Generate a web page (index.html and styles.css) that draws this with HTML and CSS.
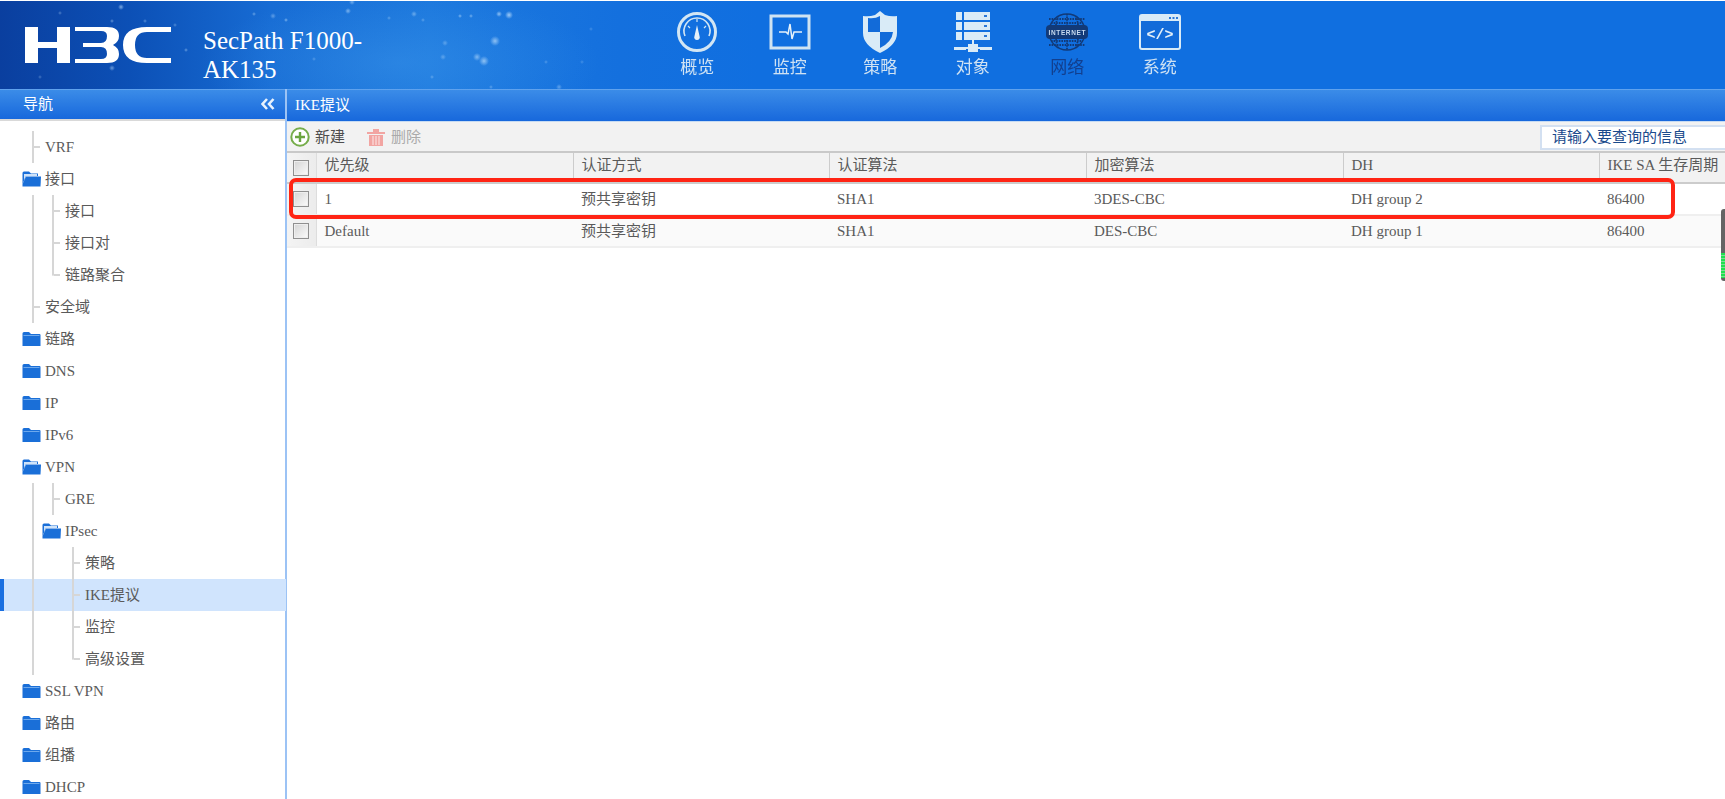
FILE: index.html
```html
<!DOCTYPE html>
<html lang="zh">
<head>
<meta charset="utf-8">
<title>IKE提议</title>
<link rel="stylesheet" href="styles.css">
</head>
<body>
<header class="top">
  <div class="brand">
    <svg class="logo" viewBox="0 0 146 36" aria-label="H3C">
      <path d="M0 0H13V15H32V0H45V36H32V21H13V36H0Z"/>
      <path d="M50 0H82Q94 0 94 9Q94 15 88 18Q94 21 94 27Q94 36 82 36H50V32H76Q82 32 82 27Q82 20 76 20H58V16H76Q82 16 82 9Q82 4 76 4H50Z"/>
      <path d="M146 0V5H122Q110 5 110 18Q110 31 122 31H146V36H122Q98 36 98 18Q98 0 122 0Z"/>
    </svg>
    <div class="model">SecPath F1000-AK135</div>
  </div>
  <nav class="mainnav">
    <a class="navitem">
      <svg viewBox="0 0 42 42" class="navicon">
        <circle cx="21" cy="21" r="18.5" fill="none" stroke="#d3e6f4" stroke-width="3"/>
        <path d="M9 25A13 13 0 1 1 33 25" fill="none" stroke="#d3e6f4" stroke-width="1.6"/>
        <path d="M21 14L23.5 25A2.8 2.8 0 1 1 18.500 25Z" fill="#e6f1f9"/>
        <path d="M12 15l2 2M30 15l-2 2M21 8v3" stroke="#d3e6f4" stroke-width="1.2"/>
      </svg>
      <span>概览</span>
    </a>
    <a class="navitem">
      <svg viewBox="0 0 42 42" class="navicon">
        <rect x="2" y="5" width="38" height="32" fill="none" stroke="#cfe3f2" stroke-width="3"/>
        <path d="M10 21H17L19 23L21 13L23 28L25 21H33" fill="none" stroke="#e6f1f9" stroke-width="1.5"/>
      </svg>
      <span>监控</span>
    </a>
    <a class="navitem">
      <svg viewBox="0 0 42 42" class="navicon">
        <path d="M21 0L26 4Q32 6 38 5V22Q38 34 21 42Q4 34 4 22V5Q10 6 16 4Z" fill="#d9ebf7"/>
        <path d="M21 7V21H9V7Q16 8 21 5ZM21 21H34Q33 31 21 37Z" fill="#126bd9"/>
      </svg>
      <span>策略</span>
    </a>
    <a class="navitem">
      <svg viewBox="0 0 42 42" class="navicon">
        <path d="M4 1H10V9H4ZM12 1H38V9H12ZM4 11H10V19H4ZM12 11H38V19H12ZM4 21H10V29H4ZM12 21H38V29H12Z" fill="#d9ebf7"/>
        <path d="M32 4h3v2h-3ZM32 14h3v2h-3ZM32 24h3v2h-3Z" fill="#2a78d8"/>
        <path d="M20 29H22V33H20ZM2 36H14V39H2ZM28 36H40V39H28ZM16 33H26V41H16ZM14 36H28V38H14Z" fill="#d9ebf7"/>
      </svg>
      <span>对象</span>
    </a>
    <a class="navitem navitem-on">
      <svg viewBox="0 0 42 42" class="navicon">
        <circle cx="21" cy="21" r="18" fill="none" stroke="#123a78" stroke-width="1.5"/>
        <path d="M5 12H37M5 30H37M21 3V39M12 5Q7 21 12 37M30 5Q35 21 30 37M3 8H39M3 34H39" fill="none" stroke="#123a78" stroke-width="1.8" stroke-dasharray="1.600 1"/>
        <rect x="0" y="14" width="42" height="14" rx="4" fill="#123a78"/>
        <text x="21" y="24" class="globe-text" textLength="37">INTERNET</text>
      </svg>
      <span>网络</span>
    </a>
    <a class="navitem">
      <svg viewBox="0 0 42 42" class="navicon">
        <rect x="1" y="4" width="40" height="34" rx="2" fill="#126bd9" stroke="#d9ebf7" stroke-width="2"/>
        <path d="M1 4H41V10H1Z" fill="#d9ebf7"/>
        <path d="M30 6h2v2h-2ZM33.500 6h2v2h-2ZM37 6h2v2h-2Z" fill="#2a78d8"/>
        <text x="21" y="28" class="code-text" text-anchor="middle">&lt;/&gt;</text>
      </svg>
      <span>系统</span>
    </a>
  </nav>
</header>

<div class="main">
  <aside class="side">
    <div class="bar bar-nav"><span>导航</span>
      <svg class="collapse" viewBox="0 0 14 12"><path d="M6 1L1.500 6L6 11M12.500 1L8 6L12.500 11" fill="none" stroke="#e8f2fd" stroke-width="2.600"/></svg>
    </div>
    <div class="tree">
      <div class="leaf top-leaf"><span>VRF</span></div>
      <div class="row row-l1"><svg class="folder" viewBox="0 0 19 16"><use href="#open"/></svg><span>接口</span></div>
      <div class="group">
        <div class="sub">
          <div class="leaf"><span>接口</span></div>
          <div class="leaf"><span>接口对</span></div>
          <div class="leaf last"><span>链路聚合</span></div>
        </div>
        <div class="tick"><span>安全域</span></div>
      </div>
      <div class="row row-l1"><svg class="folder" viewBox="0 0 19 16"><use href="#closed"/></svg><span>链路</span></div>
      <div class="row row-l1"><svg class="folder" viewBox="0 0 19 16"><use href="#closed"/></svg><span>DNS</span></div>
      <div class="row row-l1"><svg class="folder" viewBox="0 0 19 16"><use href="#closed"/></svg><span>IP</span></div>
      <div class="row row-l1"><svg class="folder" viewBox="0 0 19 16"><use href="#closed"/></svg><span>IPv6</span></div>
      <div class="row row-l1"><svg class="folder" viewBox="0 0 19 16"><use href="#open"/></svg><span>VPN</span></div>
      <div class="group">
        <div class="sub"><div class="leaf"><span>GRE</span></div></div>
        <div class="row row-l2"><svg class="folder" viewBox="0 0 19 16"><use href="#open"/></svg><span>IPsec</span></div>
        <div class="sub sub3">
          <div class="leaf"><span>策略</span></div>
          <div class="leaf selected"><span>IKE提议</span></div>
          <div class="leaf"><span>监控</span></div>
          <div class="leaf last"><span>高级设置</span></div>
        </div>
      </div>
      <div class="row row-l1"><svg class="folder" viewBox="0 0 19 16"><use href="#closed"/></svg><span>SSL VPN</span></div>
      <div class="row row-l1"><svg class="folder" viewBox="0 0 19 16"><use href="#closed"/></svg><span>路由</span></div>
      <div class="row row-l1"><svg class="folder" viewBox="0 0 19 16"><use href="#closed"/></svg><span>组播</span></div>
      <div class="row row-l1"><svg class="folder" viewBox="0 0 19 16"><use href="#closed"/></svg><span>DHCP</span></div>
    </div>
  </aside>

  <section class="content">
    <div class="bar bar-title"><span>IKE提议</span></div>
    <div class="toolbar">
      <button class="tool">
        <svg class="tool-icon" viewBox="0 0 20 20"><circle cx="10" cy="10" r="8.700" fill="#fff" stroke="#76ad4b" stroke-width="2"/><path d="M10 5V15M5 10H15" stroke="#6aa53f" stroke-width="2.400"/></svg>
        <span>新建</span>
      </button>
      <button class="tool tool-off">
        <svg class="tool-icon" viewBox="0 0 20 20"><path d="M1 5H19V7H1ZM7 2H13V5H7ZM3 8H17V19H3Z" fill="#f2a5a2"/><path d="M7 9V18M10 9V18M13 9V18" stroke="#fdeaea" stroke-width="1"/></svg>
        <span>删除</span>
      </button>
      <div class="search">请输入要查询的信息</div>
    </div>
    <div class="table-wrap">
      <table class="grid">
        <colgroup>
          <col class="c0"><col class="c1"><col class="c2"><col class="c3"><col class="c4"><col class="c5"><col>
        </colgroup>
        <thead>
          <tr><th class="chk"><i class="box"></i></th><th>优先级</th><th>认证方式</th><th>认证算法</th><th>加密算法</th><th>DH</th><th>IKE SA 生存周期</th></tr>
        </thead>
        <tbody>
          <tr><td class="chk"><i class="box"></i></td><td>1</td><td>预共享密钥</td><td>SHA1</td><td>3DES-CBC</td><td>DH group 2</td><td>86400</td></tr>
          <tr class="alt"><td class="chk"><i class="box"></i></td><td>Default</td><td>预共享密钥</td><td>SHA1</td><td>DES-CBC</td><td>DH group 1</td><td>86400</td></tr>
        </tbody>
      </table>
      <div class="callout"></div>
      <div class="widget"></div>
    </div>
  </section>
</div>

<svg class="defs" aria-hidden="true">
  <defs>
    <g id="closed">
      <path d="M0.500 2.500Q0.500 1 2 1H7L9 3H17.500Q18.500 3 18.500 4V15H0.500Z" fill="#1a6fd8"/>
      <path d="M1.500 4H17.500V5H1.500Z" fill="#6ea9ec"/>
    </g>
    <g id="open">
      <path d="M0.500 2Q0.500 0.500 2 0.500H7L9 2.500H16V5H4L0.500 13Z" fill="#1a6fd8"/>
      <path d="M2 3H15V5H4L2 9Z" fill="#cfe3f9"/>
      <path d="M0.500 15.500V13L4 5.500H19L18.500 15.500Z" fill="#1a6fd8"/>
    </g>
  </defs>
</svg>
</body>
</html>
```
FILE: styles.css
```css
* { box-sizing: border-box; }
html, body { margin: 0; height: 100%; }
body {
  width: 1725px;
  height: 799px;
  overflow: hidden;
  background: #fff;
  color: #5a5a5a;
  font: 15px/20px "Liberation Serif", "Noto Sans CJK SC", serif;
  display: flex;
  flex-direction: column;
}

/* header */
.top {
  height: 89px;
  flex: none;
  display: flex;
  border-top: 1px solid #fff;
  background:
    radial-gradient(circle 4px at 509px 14px, rgba(200,230,255,.75), transparent),
    radial-gradient(circle 3px at 499px 13px, rgba(200,230,255,.65), transparent),
    radial-gradient(circle 5px at 495px 40px, rgba(200,230,255,.65), transparent),
    radial-gradient(circle 5px at 484px 60px, rgba(200,230,255,.65), transparent),
    radial-gradient(circle 4px at 477px 56px, rgba(200,230,255,.55), transparent),
    radial-gradient(circle 3px at 414px 13px, rgba(200,230,255,.45), transparent),
    radial-gradient(circle 2px at 460px 15px, rgba(200,230,255,.55), transparent),
    radial-gradient(circle 2px at 471px 15px, rgba(200,230,255,.5), transparent),
    radial-gradient(circle 3px at 445px 42px, rgba(200,230,255,.35), transparent),
    radial-gradient(circle 3px at 443px 56px, rgba(200,230,255,.35), transparent),
    radial-gradient(circle 3px at 348px 10px, rgba(200,230,255,.55), transparent),
    radial-gradient(circle 3px at 352px 1px, rgba(200,230,255,.5), transparent),
    radial-gradient(circle 2px at 286px 19px, rgba(200,230,255,.55), transparent),
    radial-gradient(circle 3px at 273px 15px, rgba(200,230,255,.4), transparent),
    radial-gradient(circle 2px at 254px 13px, rgba(200,230,255,.45), transparent),
    radial-gradient(circle 3px at 121px 6px, rgba(200,230,255,.6), transparent),
    radial-gradient(circle 3px at 112px 67px, rgba(200,230,255,.5), transparent),
    radial-gradient(circle 2px at 186px 49px, rgba(200,230,255,.45), transparent),
    radial-gradient(circle 2px at 314px 58px, rgba(200,230,255,.3), transparent),
    radial-gradient(circle 3px at 559px 86px, rgba(200,230,255,.4), transparent),
    radial-gradient(circle 2px at 546px 61px, rgba(200,230,255,.3), transparent),
    radial-gradient(circle 2px at 591px 28px, rgba(200,230,255,.25), transparent),
    radial-gradient(circle 2px at 582px 61px, rgba(200,230,255,.25), transparent),
    radial-gradient(circle 2px at 423px 19px, rgba(200,230,255,.35), transparent),
    radial-gradient(circle 2px at 389px 17px, rgba(200,230,255,.35), transparent),
    radial-gradient(circle 2px at 432px 76px, rgba(200,230,255,.35), transparent),
    radial-gradient(circle 2px at 491px 86px, rgba(200,230,255,.35), transparent),
    radial-gradient(circle 2px at 112px 20px, rgba(200,230,255,.45), transparent),
    radial-gradient(circle 2px at 145px 20px, rgba(200,230,255,.4), transparent),
    radial-gradient(circle 2px at 175px 24px, rgba(200,230,255,.35), transparent),
    radial-gradient(circle 2px at 60px 12px, rgba(200,230,255,.35), transparent),
    radial-gradient(circle 2px at 40px 76px, rgba(200,230,255,.3), transparent),
    radial-gradient(ellipse 200px 70px at 400px 62px, rgba(70,160,240,.35), transparent),
    linear-gradient(90deg, #0a3f9f 0, #0c50b6 130px, #176cd4 270px, #1c78dd 430px, #1470de 620px, #106fe0 760px, #106fe0 100%);
}
.brand { width: 650px; display: flex; align-items: flex-start; padding: 26px 0 0 25px; }
.logo { width: 146px; height: 36px; fill: #fff; flex: none; filter: blur(.4px); }
.model {
  width: 190px;
  margin: -1px 0 0 32px;
  color: #fff;
  font-size: 25px;
  line-height: 29px;
}
.mainnav { display: flex; margin-left: 1px; }
.navitem {
  width: 92.500px;
  display: flex;
  flex-direction: column;
  align-items: center;
  padding-top: 10px;
  color: #cfe2f3;
  font-family: "Noto Sans CJK SC", sans-serif;
  font-size: 17px;
  line-height: 20px;
}
.navitem:nth-child(3) { margin-left: -2px; }
.navitem:nth-child(5) { margin-left: 2px; }
.navitem span { margin-top: 3px; filter: blur(.4px); }
.navitem-on { color: #123f8e; }
.navicon { width: 42px; height: 42px; filter: blur(.35px); }
.globe-text { fill: #c9dcf0; font: 700 6.500px "Liberation Sans", sans-serif; text-anchor: middle; }
.code-text { fill: #e6f1f9; font: 700 15px "Liberation Mono", monospace; }

/* layout */
.main { flex: 1; min-height: 0; display: flex; }
.side { width: 287px; flex: none; border-right: 2px solid #9cc3f5; display: flex; flex-direction: column; }
.content { flex: 1; min-width: 0; display: flex; flex-direction: column; }

.bar {
  display: flex;
  align-items: center;
  justify-content: space-between;
  color: #fff;
  border-top: 1px solid #5fa2ee;
  background: linear-gradient(#3b8ce8, #1768dc);
}
.bar-nav { height: 32px; flex: none; padding: 0 10px 2px 23px; border-bottom: 2px solid #d9d9d9; }
.bar-title { height: 33px; flex: none; padding: 0 0 2px 8px; border-bottom: 1px solid #c6dbf3; }
.collapse { width: 14px; height: 12px; }

/* tree */
.tree { position: relative; isolation: isolate; padding-top: 10px; margin-right: -2px; }
.row, .leaf, .tick { height: 32px; display: flex; align-items: center; white-space: nowrap; }
.row > span, .leaf > span, .tick > span { margin-top: -1px; }
.row-l1 { padding-left: 22px; }
.row-l2 { padding-left: 8px; }
.folder { width: 19px; height: 16px; margin-right: 4px; flex: none; }
.group { margin-left: 32px; border-left: 2px solid #d6d6d6; }
.sub { margin-left: 18px; }
.sub3 { margin-left: 38px; }
.leaf {
  padding-left: 13px;
  background:
    linear-gradient(#d6d6d6, #d6d6d6) 0 0 / 2px 100% no-repeat,
    linear-gradient(#d6d6d6, #d6d6d6) 2px 50% / 6px 2px no-repeat;
}
.leaf.last {
  background:
    linear-gradient(#d6d6d6, #d6d6d6) 0 0 / 2px 52% no-repeat,
    linear-gradient(#d6d6d6, #d6d6d6) 2px 50% / 6px 2px no-repeat;
}
.top-leaf { margin-left: 32px; }
.tick {
  padding-left: 11px;
  background: linear-gradient(#d6d6d6, #d6d6d6) 0 50% / 6px 2px no-repeat;
}
.selected::after {
  content: "";
  box-sizing: border-box;
  position: absolute;
  left: 0;
  width: 286px;
  height: 32px;
  z-index: -1;
  background: #d0e4fd;
  border-left: 4px solid #1a6fe0;
}

/* toolbar */
.toolbar {
  height: 31px;
  flex: none;
  display: flex;
  align-items: center;
  background: #f2f2f2;
  padding-left: 3px;
  border-bottom: 2px solid #c9c9c9;
}
.tool {
  display: flex;
  align-items: center;
  gap: 5px;
  padding: 0;
  border: 0;
  background: none;
  color: #4e4e4e;
  font: inherit;
  margin-right: 21px;
}
.tool-off { color: #aaa; }
.tool-icon { width: 20px; height: 20px; }
.search {
  width: 185px;
  height: 25px;
  margin: 2px 0 0 auto;
  padding: 0 0 0 10px;
  line-height: 21px;
  color: #1a4a8c;
  background: #fff;
  border: 2px solid #d3e0f1;
  border-right: 0;
  white-space: nowrap;
}

/* table */
.table-wrap { position: relative; flex: 1; min-height: 0; }
.grid { table-layout: fixed; width: 1438px; border-collapse: collapse; }
.c0 { width: 29px; }
.c1 { width: 257px; }
.c2 { width: 256px; }
.c3 { width: 257px; }
.c4 { width: 257px; }
.c5 { width: 256px; }
.grid th, .grid td {
  height: 32px;
  padding: 0 0 0 8px;
  font-weight: 400;
  text-align: left;
  white-space: nowrap;
  overflow: hidden;
}
.grid th {
  height: 30px;
  background: #f2f2f2;
  border-bottom: 2px solid #ccc;
  border-left: 1px solid #ccc;
  padding-bottom: 5px;
}
.grid td { padding-bottom: 1px; }
.grid tbody tr { border-bottom: 2px solid #efefef; }
.alt td { background: #fafafa; }
.grid .chk {
  padding: 0 0 0 6px;
  border-left: 0;
  border-right: 1px solid #ddd;
  background: linear-gradient(90deg, #f4f4f4, #ececec);
}
.box {
  display: block;
  width: 16px;
  height: 16px;
  border: 1px solid #8f8f8f;
  background: linear-gradient(135deg, #d4d4d4, #fbfbfb);
  box-shadow: inset 0 0 0 1px #eee;
}
.callout {
  position: absolute;
  left: 2px;
  top: 25px;
  width: 1386px;
  height: 41px;
  border: 4px solid #ff2414;
  border-radius: 7px;
}
.widget {
  position: absolute;
  right: 0;
  top: 56px;
  width: 4px;
  height: 72px;
  border-radius: 3px 0 0 3px;
  background: repeating-linear-gradient(#22e04f 0 2px, #7fdc96 2px 3px) 0 44px / 100% 25px no-repeat, #646464;
}
.defs { width: 0; height: 0; position: absolute; }
```
